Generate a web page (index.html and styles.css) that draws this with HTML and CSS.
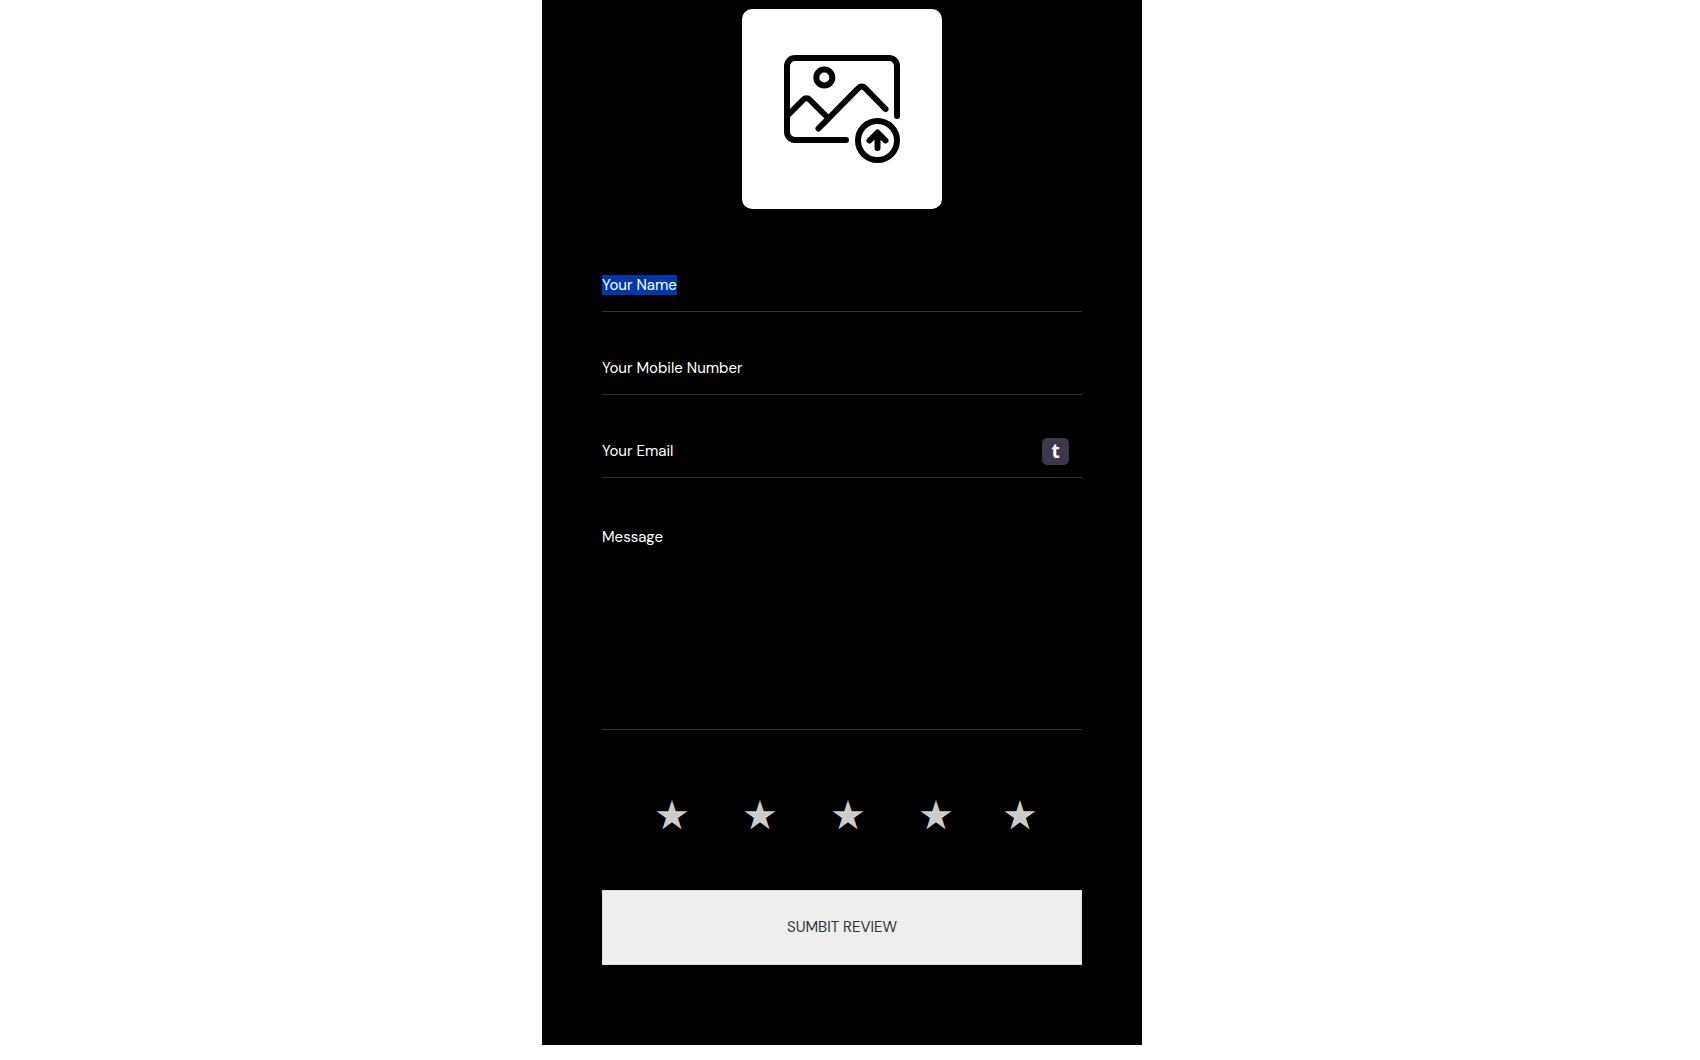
FILE: index.html
```html
<!DOCTYPE html>
<html lang="en">
<head>
<meta charset="utf-8">
<meta name="viewport" content="width=device-width, initial-scale=1">
<title>Review</title>
<link rel="stylesheet" href="styles.css">
</head>
<body>
<main class="panel">
  <form class="review-form">
    <button type="button" class="upload" aria-label="Upload photo">
      <svg class="upload-icon" viewBox="0 0 200 200" fill="none" stroke="#000" stroke-width="6" stroke-linecap="round" stroke-linejoin="round">
        <path d="M155 107V57a8 8 0 0 0-8-8H53a8 8 0 0 0-8 8v66a8 8 0 0 0 8 8h51"/>
        <circle cx="82.300" cy="68.500" r="8"/>
        <path d="M46 106l15.500-15.500a4 4 0 0 1 6 0L85.500 108.500"/>
        <path d="M76.500 119.500l40-40.500a4.500 4.500 0 0 1 6.500 0l20.500 21"/>
        <circle cx="135.500" cy="131.500" r="19.500"/>
        <path d="M135.500 139v-15M127.500 131.500l8-8 8 8"/>
      </svg>
    </button>

    <div class="field">
      <input class="control" id="name" type="text">
      <label class="label" for="name"><span class="selected">Your Name</span></label>
    </div>
    <div class="field">
      <input class="control" id="mobile" type="tel">
      <label class="label" for="mobile">Your Mobile Number</label>
    </div>
    <div class="field">
      <input class="control" id="email" type="email">
      <label class="label" for="email">Your Email</label>
      <button type="button" class="autofill">t</button>
    </div>
    <div class="field field-message">
      <textarea class="control" id="message"></textarea>
      <label class="label" for="message">Message</label>
    </div>

    <fieldset class="rating" aria-label="Rating">
      <label class="star"><input class="star-input" type="radio" name="rating" value="1" aria-label="1 star">★</label>
      <label class="star"><input class="star-input" type="radio" name="rating" value="2" aria-label="2 stars">★</label>
      <label class="star"><input class="star-input" type="radio" name="rating" value="3" aria-label="3 stars">★</label>
      <label class="star"><input class="star-input" type="radio" name="rating" value="4" aria-label="4 stars">★</label>
      <label class="star"><input class="star-input" type="radio" name="rating" value="5" aria-label="5 stars">★</label>
    </fieldset>

    <button type="submit" class="submit">SUMBIT REVIEW</button>
  </form>
</main>
</body>
</html>
```
FILE: styles.css
```css
* {
  box-sizing: border-box;
}

body {
  margin: 0;
  padding-right: 16px;
  background: #fff;
  color: #fff;
  font: 400 15px/20px "DM Sans", Inter, "Liberation Sans", sans-serif;
}

.panel {
  max-width: 600px;
  margin: 0 auto;
  padding: 9px 60px 80px;
  background: #000;
}

.review-form {
  display: flex;
  flex-direction: column;
}

.upload {
  align-self: center;
  width: 200px;
  height: 200px;
  margin-bottom: 49px;
  padding: 0;
  border: 0;
  border-radius: 10px;
  background: #fff;
}

.upload-icon {
  display: block;
  width: 100%;
}

.field {
  display: grid;
  grid-template-columns: 1fr auto;
  align-items: center;
  height: 54px;
  margin-bottom: 29px;
}

.control {
  grid-area: 1 / 1 / 2 / 3;
  align-self: stretch;
  width: 100%;
  padding: 0;
  border: 0;
  border-bottom: 1px solid #333;
  border-radius: 0;
  outline: 0;
  background: transparent;
  color: #fff;
  font: inherit;
  resize: none;
}

.label {
  grid-area: 1 / 1;
  justify-self: start;
  pointer-events: none;
}

.selected {
  display: block;
  background: #0038a8;
}

.autofill {
  grid-area: 1 / 2;
  width: 27px;
  height: 27px;
  margin-right: 13px;
  padding: 0;
  border: 0;
  border-radius: 5px;
  background: #3d374e;
  color: #fff;
  font: 700 19px/24px "Open Sans", sans-serif;
}

.field-message {
  align-items: start;
  height: 223px;
  margin-bottom: 0;
}

.field-message .label {
  padding-top: 20px;
}

.rating {
  display: grid;
  grid-template-columns: repeat(4, 11fr) 10fr;
  height: 160px;
  margin: 0;
  padding: 61px 22px 0 26px;
  border: 0;
}

.star {
  color: #ccc;
  font: 400 40px/48px "DejaVu Sans", sans-serif;
  text-align: center;
  cursor: pointer;
}

.star-input {
  position: absolute;
  margin: 0;
  opacity: 0;
}

.submit {
  height: 75px;
  padding: 0 0 2px;
  border: 1px solid #ddd;
  background: #eee;
  color: #333;
  font: inherit;
}
```
